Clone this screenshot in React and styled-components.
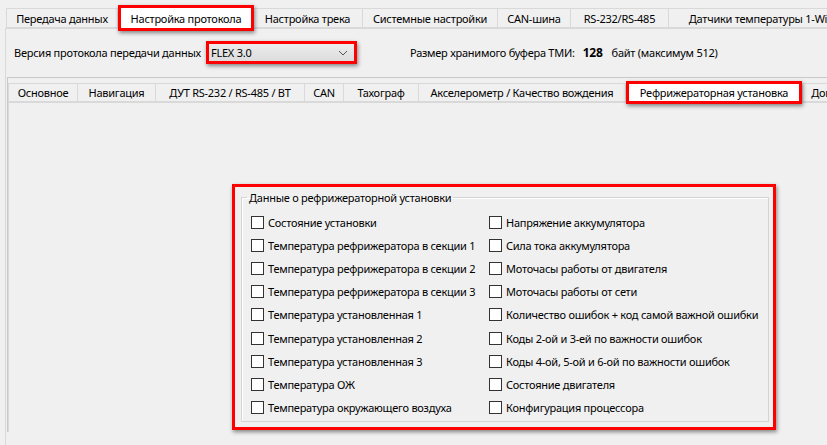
import React from 'react'
import styled, { createGlobalStyle } from 'styled-components'

const topTabs = [
  { label: 'Передача данных', w: 112 },
  { label: 'Настройка протокола', w: 132, active: true },
  { label: 'Настройка трека', w: 111 },
  { label: 'Системные настройки', w: 136 },
  { label: 'CAN-шина', w: 74 },
  { label: 'RS-232/RS-485', w: 99 },
  { label: 'Датчики температуры 1-Wire', w: 190 },
]

const innerTabs = [
  { label: 'Основное', w: 70 },
  { label: 'Навигация', w: 79 },
  { label: 'ДУТ RS-232 / RS-485 / BT', w: 150 },
  { label: 'CAN', w: 40 },
  { label: 'Тахограф', w: 76 },
  { label: 'Акселерометр / Качество вождения', w: 208 },
  { label: 'Рефрижераторная установка', w: 172, active: true },
  { label: 'Дополнительно', w: 100 },
]

const leftItems = [
  'Состояние установки',
  'Температура рефрижератора в секции 1',
  'Температура рефрижератора в секции 2',
  'Температура рефрижератора в секции 3',
  'Температура установленная 1',
  'Температура установленная 2',
  'Температура установленная 3',
  'Температура ОЖ',
  'Температура окружающего воздуха',
]

const rightItems = [
  'Напряжение аккумулятора',
  'Сила тока аккумулятора',
  'Моточасы работы от двигателя',
  'Моточасы работы от сети',
  'Количество ошибок + код самой важной ошибки',
  'Коды 2-ой и 3-ей по важности ошибок',
  'Коды 4-ой, 5-ой и 6-ой по важности ошибок',
  'Состояние двигателя',
  'Конфигурация процессора',
]

function App() {
  return (
    <>
      <GlobalStyle />
      <Window>
        <TabStrip>
          {topTabs.map((t) => (
            <TopTab key={t.label} $w={t.w} $active={t.active}>
              {t.label}
            </TopTab>
          ))}
        </TabStrip>
        <Panel>
          <ProtoRow>
            <Label>Версия протокола передачи данных</Label>
            <Select>
              <span>FLEX 3.0</span>
              <svg width="10" height="6" viewBox="0 0 10 6">
                <path d="M1 1 L5 5 L9 1" fill="none" stroke="#555" strokeWidth="1" />
              </svg>
            </Select>
            <BufferInfo>
              Размер хранимого буфера ТМИ:
              <Bold>128</Bold>
              байт (максимум 512)
            </BufferInfo>
          </ProtoRow>
          <InnerArea>
            <InnerStrip>
              {innerTabs.map((t) => (
                <InnerTab key={t.label} $w={t.w} $active={t.active}>
                  {t.label}
                </InnerTab>
              ))}
            </InnerStrip>
            <InnerPanel>
              <Highlight>
                <GroupBox>
                  <Legend>Данные о рефрижераторной установки</Legend>
                  <Columns>
                    <Column>
                      {leftItems.map((l) => (
                        <Check key={l}>
                          <Box />
                          {l}
                        </Check>
                      ))}
                    </Column>
                    <Column>
                      {rightItems.map((l) => (
                        <Check key={l}>
                          <Box />
                          {l}
                        </Check>
                      ))}
                    </Column>
                  </Columns>
                </GroupBox>
              </Highlight>
            </InnerPanel>
          </InnerArea>
        </Panel>
      </Window>
    </>
  )
}

export default App

const GlobalStyle = createGlobalStyle`
  html, body {
    margin: 0;
    padding: 0;
    background: #f0f0f0;
    overflow: hidden;
  }
  body {
    font-family: "Noto Sans", "DejaVu Sans", sans-serif;
    font-size: 11px;
    letter-spacing: -0.25px;
    color: #000;
  }
`

const Window = styled.div`
  width: 827px;
  height: 445px;
  overflow: hidden;
  background: #f0f0f0;
`

const TabStrip = styled.div`
  display: flex;
  align-items: flex-end;
  height: 28px;
  padding-left: 7px;
  white-space: nowrap;
`

const redMark = `
  &::after {
    content: "";
    position: absolute;
    inset: -3px;
    border: 3px solid #ff0000;
    box-shadow: 1px 2px 4px rgba(0, 0, 0, 0.45);
    pointer-events: none;
  }
`

const TopTab = styled.div`
  position: relative;
  flex: 0 0 auto;
  box-sizing: border-box;
  width: ${(p) => p.$w}px;
  height: ${(p) => (p.$active ? 21 : 20)}px;
  margin: ${(p) => (p.$active ? '0 1px 0 2px' : '0 0 0 -1px')};
  display: flex;
  align-items: center;
  justify-content: center;
  overflow: ${(p) => (p.$active ? 'visible' : 'hidden')};
  border: 1px solid #d9d9d9;
  border-bottom: ${(p) => (p.$active ? 'none' : '1px solid #d9d9d9')};
  background: ${(p) => (p.$active ? '#ffffff' : '#f0f0f0')};
  z-index: ${(p) => (p.$active ? 2 : 1)};
  ${(p) => (p.$active ? redMark : '')}
`

const Panel = styled.div`
  margin-left: 5px;
  border-left: 1px solid #d9d9d9;
  border-top: 1px solid #d9d9d9;
  height: 420px;
`

const ProtoRow = styled.div`
  display: flex;
  align-items: center;
  height: 47px;
  padding-left: 8px;
  margin-bottom: 1px;
  white-space: nowrap;
`

const Label = styled.div`
  width: 194px;
`

const Select = styled.div`
  position: relative;
  box-sizing: border-box;
  width: 147px;
  height: 19px;
  display: flex;
  align-items: center;
  justify-content: space-between;
  padding: 0 6px 0 2px;
  background: linear-gradient(#ececec, #dcdcdc);
  border: 1px solid #adadad;
  ${redMark}
`

const BufferInfo = styled.div`
  margin-left: 55px;
  display: flex;
  align-items: center;
`

const Bold = styled.b`
  margin: 0 9px 0 8px;
  font-size: 12px;
`

const InnerArea = styled.div`
  margin-left: 1px;
  border-top: 1px solid #c8c8c8;
  border-left: 1px solid #c8c8c8;
  padding-top: 5px;
`

const InnerStrip = styled.div`
  display: flex;
  align-items: flex-end;
  height: 19px;
  white-space: nowrap;
`

const InnerTab = styled.div`
  position: relative;
  flex: 0 0 auto;
  box-sizing: border-box;
  width: ${(p) => p.$w}px;
  height: ${(p) => (p.$active ? 18 : 19)}px;
  margin: ${(p) => (p.$active ? '0 3px 0 2px' : '0 0 0 -1px')};
  align-self: flex-start;
  display: flex;
  align-items: center;
  justify-content: center;
  overflow: ${(p) => (p.$active ? 'visible' : 'hidden')};
  border: 1px solid #d9d9d9;
  border-bottom: ${(p) => (p.$active ? 'none' : '1px solid #d9d9d9')};
  background: ${(p) => (p.$active ? '#ffffff' : '#f0f0f0')};
  z-index: ${(p) => (p.$active ? 2 : 1)};
  &:first-child {
    margin-left: 0;
  }
  ${(p) => (p.$active ? redMark : '')}
`

const InnerPanel = styled.div`
  border-left: 1px solid #d9d9d9;
  border-top: 1px solid #d9d9d9;
  height: 330px;
  padding: 81px 0 0 223px;
  box-sizing: border-box;
`

const Highlight = styled.div`
  display: inline-block;
  border: 3px solid #ff0000;
  padding: 3px 4px 5px 6px;
  box-shadow: 1px 2px 4px rgba(0, 0, 0, 0.45);
`

const GroupBox = styled.fieldset`
  margin: 0;
  width: 528px;
  height: 232px;
  box-sizing: border-box;
  border: 1px solid #d4d4d4;
  box-shadow: inset 1px 1px 0 #fff;
  padding: 6px 0 0 9px;
`

const Legend = styled.legend`
  padding: 0 2px;
  margin-left: -4px;
`

const Columns = styled.div`
  display: grid;
  grid-template-columns: 238px 1fr;
`

const Column = styled.div`
  display: flex;
  flex-direction: column;
`

const Check = styled.label`
  display: flex;
  align-items: center;
  height: 23.1px;
  white-space: nowrap;
`

const Box = styled.span`
  box-sizing: border-box;
  width: 13px;
  height: 13px;
  margin-right: 4px;
  border: 1px solid #333;
  background: #fff;
`
